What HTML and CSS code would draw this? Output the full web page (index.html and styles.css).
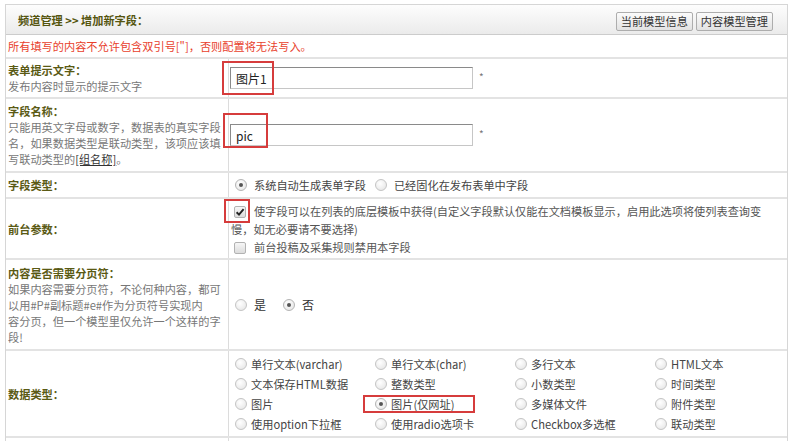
FILE: index.html
```html
<!DOCTYPE html>
<html lang="zh-CN">
<head>
  <meta charset="UTF-8">
  <meta name="viewport" content="width=device-width, initial-scale=1.0">
  <title>增加新字段</title>
  <link rel="stylesheet" href="styles.css">
</head>
<body>
  <div class="panel">
    <div class="panel-head">
      <span class="panel-title">频道管理 &gt;&gt; 增加新字段：</span>
      <div class="panel-tools">
        <button class="btn">当前模型信息</button>
        <button class="btn">内容模型管理</button>
      </div>
    </div>

    <div class="notice">所有填写的内容不允许包含双引号["]，否则配置将无法写入。</div>

    <!-- 表单提示文字 -->
    <div class="row row-prompt">
      <div class="label"><div><b>表单提示文字：</b><br>发布内容时显示的提示文字</div></div>
      <div class="field"><input class="text" type="text" value="图片1"><span class="req">*</span></div>
      <span class="mark mark-prompt"></span>
    </div>

    <!-- 字段名称 -->
    <div class="row row-name">
      <div class="label"><div><b>字段名称：</b><br>只能用英文字母或数字，数据表的真实字段<br>名，如果数据类型是联动类型，该项应该填<br>写联动类型的<a class="link" href="#">[组名称]</a>。</div></div>
      <div class="field"><input class="text" type="text" value="pic"><span class="req">*</span></div>
      <span class="mark mark-name"></span>
    </div>

    <!-- 字段类型 -->
    <div class="row row-kind">
      <div class="label"><b>字段类型：</b></div>
      <div class="field">
        <label class="opt gap"><span class="radio on"></span>系统自动生成表单字段</label>
        <label class="opt"><span class="radio"></span>已经固化在发布表单中字段</label>
      </div>
    </div>

    <!-- 前台参数 -->
    <div class="row row-front">
      <div class="label"><b>前台参数：</b></div>
      <div class="field">
        <div class="checks">
          <span class="box on"><svg width="12" height="12" viewBox="0 0 12 12"><path d="M2.6 6.3 L5 8.6 L9.6 3.2" fill="none" stroke="#222" stroke-width="1.9"/></svg></span>使字段可以在列表的底层模板中获得(自定义字段默认仅能在文档模板显示，启用此选项将使列表查询变慢，如无必要请不要选择)<br>
          <span class="box"></span>前台投稿及采集规则禁用本字段
        </div>
      </div>
      <span class="mark mark-check"></span>
    </div>

    <!-- 分页符 -->
    <div class="row row-page">
      <div class="label"><div><b>内容是否需要分页符：</b><br>如果内容需要分页符，不论何种内容，都可<br>以用#P#副标题#e#作为分页符号实现内<br>容分页，但一个模型里仅允许一个这样的字<br>段!</div></div>
      <div class="field">
        <label class="opt yes"><span class="radio"></span>是</label>
        <label class="opt"><span class="radio on"></span>否</label>
      </div>
    </div>

    <!-- 数据类型 -->
    <div class="row row-type">
      <div class="label"><b>数据类型：</b></div>
      <div class="field">
        <div class="types">
          <label class="item"><span class="radio"></span>单行文本(varchar)</label>
          <label class="item"><span class="radio"></span>单行文本(char)</label>
          <label class="item"><span class="radio"></span>多行文本</label>
          <label class="item"><span class="radio"></span>HTML文本</label>
          <label class="item"><span class="radio"></span>文本保存HTML数据</label>
          <label class="item"><span class="radio"></span>整数类型</label>
          <label class="item"><span class="radio"></span>小数类型</label>
          <label class="item"><span class="radio"></span>时间类型</label>
          <label class="item"><span class="radio"></span>图片</label>
          <label class="item"><span class="radio on"></span>图片(仅网址)</label>
          <label class="item"><span class="radio"></span>多媒体文件</label>
          <label class="item"><span class="radio"></span>附件类型</label>
          <label class="item"><span class="radio"></span>使用option下拉框</label>
          <label class="item"><span class="radio"></span>使用radio选项卡</label>
          <label class="item"><span class="radio"></span>Checkbox多选框</label>
          <label class="item"><span class="radio"></span>联动类型</label>
        </div>
      </div>
      <span class="mark mark-type"></span>
    </div>

    <div class="row row-last">
      <div class="label"></div>
      <div class="field"></div>
    </div>
  </div>
</body>
</html>
```

FILE: styles.css
```css
body {
  margin: 0;
  font-family: "Noto Sans CJK SC", sans-serif;
  font-size: 11.2px;
  color: #444;
  background: #fff;
}
.panel {
  margin: 4px 0 0 5px;
  width: 783px;
  box-sizing: border-box;
  border: 1px solid #d6d6d6;
  border-bottom: none;
}
.panel-head {
  height: 30px;
  box-sizing: border-box;
  display: flex;
  align-items: center;
  justify-content: space-between;
  padding: 0 14px 0 12px;
  background: linear-gradient(#fdfdfd, #ebebeb);
  border-bottom: 1px solid #cccccc;
}
.panel-title {
  font-weight: bold;
  color: #55550f;
}
.panel-tools {
  display: flex;
  margin-top: 4px;
}
.btn {
  height: 19px;
  padding: 0 4px;
  margin-left: 3px;
  font: inherit;
  line-height: 17px;
  color: #333;
  border: 1px solid #adadad;
  border-radius: 2px;
  background: linear-gradient(#fbfbfb, #e2e2e2);
}
.notice {
  height: 24px;
  box-sizing: border-box;
  display: flex;
  align-items: center;
  padding-left: 2px;
  color: #e8412c;
  border-bottom: 2px solid #e3e3e3;
}
.row {
  position: relative;
  display: grid;
  grid-template-columns: 223px 1fr;
  box-sizing: border-box;
  border-bottom: 2px solid #e3e3e3;
}
.label {
  display: flex;
  align-items: center;
  padding-left: 2px;
  line-height: 16px;
  color: #777;
  border-right: 1px solid #dcdcdc;
}
.label b {
  color: #5a5a14;
}
.link {
  color: #333;
}
.field {
  display: flex;
  align-items: center;
  padding: 0 20px 0 2px;
  color: #444;
}
.row-prompt { height: 40px; }
.row-name { height: 74px; }
.row-kind { height: 26px; }
.row-front { height: 61px; }
.row-page { height: 91px; }
.row-type { height: 87px; }
.row-last { height: 3px; border-bottom: none; }

.text {
  width: 243px;
  height: 22px;
  box-sizing: border-box;
  margin-left: -1px;
  padding: 0 5px;
  font: inherit;
  font-size: 12px;
  color: #222;
  border: 1px solid #c6c6c6;
  border-top-color: #8a8a8a;
  border-left-color: #8a8a8a;
}
.req {
  margin: -3px 0 0 6px;
  font-size: 10px;
  color: #777;
}

/* radios / checkboxes drawn by hand */
.radio {
  position: relative;
  display: inline-block;
  width: 12px;
  height: 12px;
  box-sizing: border-box;
  border: 1px solid #c4c4c4;
  border-radius: 50%;
  background: radial-gradient(circle at 40% 35%, #fff, #e2e2e2);
}
.radio.on {
  border-color: #b4b4b4;
}
.radio.on::after {
  content: "";
  position: absolute;
  left: 3px;
  top: 3px;
  width: 4px;
  height: 4px;
  border-radius: 50%;
  background: #555;
}
.opt {
  display: flex;
  align-items: center;
}
.opt .radio {
  margin: 0 7px 0 4px;
}
.opt.gap {
  margin-right: 5px;
}
.opt.yes {
  margin-right: 13px;
}
.row-page .opt {
  font-size: 12px;
  color: #333;
}

.checks {
  line-height: 18px;
  color: #555;
}
.box {
  display: inline-block;
  width: 12px;
  height: 12px;
  box-sizing: border-box;
  margin: 0 8px 0 3px;
  vertical-align: -2px;
  border: 1px solid #b2b2b2;
  border-radius: 2px;
  background: linear-gradient(#f6f6f6, #dcdcdc);
}
.box svg {
  display: block;
  margin: -1px 0 0 -1px;
}

.types {
  display: grid;
  grid-template-columns: repeat(4, 140px);
  line-height: 20px;
  color: #444;
}
.item {
  display: flex;
  align-items: center;
}
.item .radio {
  margin: 0 4px 0 4px;
}

/* red annotation frames */
.mark {
  position: absolute;
  box-sizing: border-box;
  border: 2px solid #d63c3c;
  pointer-events: none;
}
.mark-prompt { left: 216px; top: 2px; width: 52px; height: 34px; }
.mark-name { left: 217px; top: 14px; width: 45px; height: 35px; }
.mark-check { left: 218px; top: 0; width: 26px; height: 24px; }
.mark-type { left: 357px; top: 44px; width: 112px; height: 18px; }
```
